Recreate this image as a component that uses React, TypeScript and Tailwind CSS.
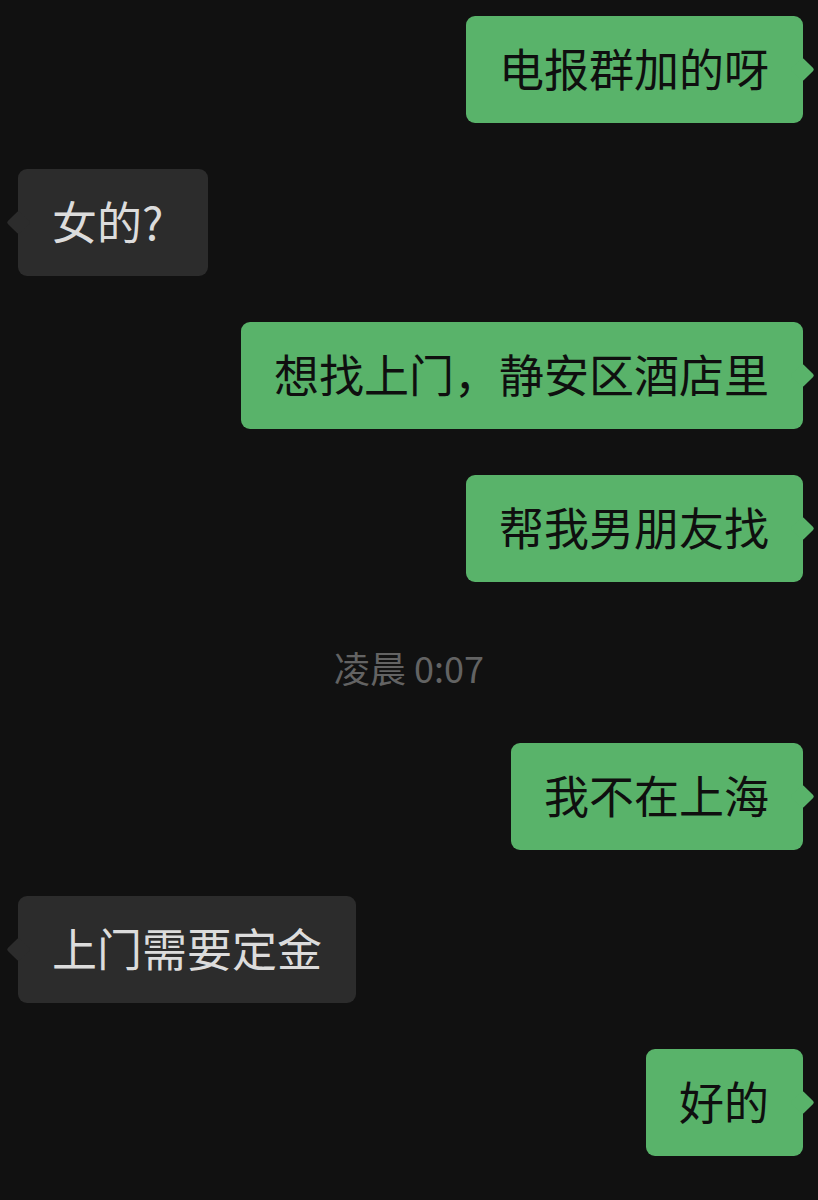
const font = {
  fontFamily: '"Noto Sans CJK SC", "Noto Sans", sans-serif',
};

type Msg =
  | { kind: "me"; text: string }
  | { kind: "them"; text: string; wide?: boolean }
  | { kind: "time"; text: string };

const messages: Msg[] = [
  { kind: "me", text: "电报群加的呀" },
  { kind: "them", text: "女的?", wide: true },
  { kind: "me", text: "想找上门，静安区酒店里" },
  { kind: "me", text: "帮我男朋友找" },
  { kind: "time", text: "凌晨 0:07" },
  { kind: "me", text: "我不在上海" },
  { kind: "them", text: "上门需要定金" },
  { kind: "me", text: "好的" },
];

function Bubble({ msg }: { msg: Msg }) {
  if (msg.kind === "time") {
    return (
      <div className="h-[69px] flex items-center justify-center pt-[8px] text-[36px] text-[#636363]">
        {msg.text}
      </div>
    );
  }

  const mine = msg.kind === "me";
  const wide = msg.kind === "them" && msg.wide;

  return (
    <div className={mine ? "flex justify-end pr-[15px]" : "flex justify-start pl-[18px]"}>
      <div
        className={
          mine
            ? "relative h-[107px] flex items-center pl-[33px] pr-[34px] rounded-[9px] bg-[#59b36a] text-[#0f0f0f] text-[45px]"
            : wide
              ? "relative h-[107px] flex items-center pl-[34px] pr-[45px] rounded-[9px] bg-[#2c2c2c] text-[#dcdcdc] text-[45px]"
              : "relative h-[107px] flex items-center px-[34px] rounded-[9px] bg-[#2c2c2c] text-[#dcdcdc] text-[45px]"
        }
      >
        <span
          className={
            mine
              ? "absolute top-[45px] right-[-8px] w-[17px] h-[17px] rotate-45 rounded-[2px] bg-[#59b36a]"
              : "absolute top-[45px] left-[-8px] w-[17px] h-[17px] rotate-45 rounded-[2px] bg-[#2c2c2c]"
          }
        />
        <span className="relative leading-none whitespace-nowrap pb-[4px]">{msg.text}</span>
      </div>
    </div>
  );
}

export default function App() {
  return (
    <div className="w-[818px] h-[1200px] bg-[#111111] pt-[16px] flex flex-col gap-[46px] overflow-hidden" style={font}>
      {messages.map((m, i) => (
        <Bubble key={i} msg={m} />
      ))}
    </div>
  );
}
